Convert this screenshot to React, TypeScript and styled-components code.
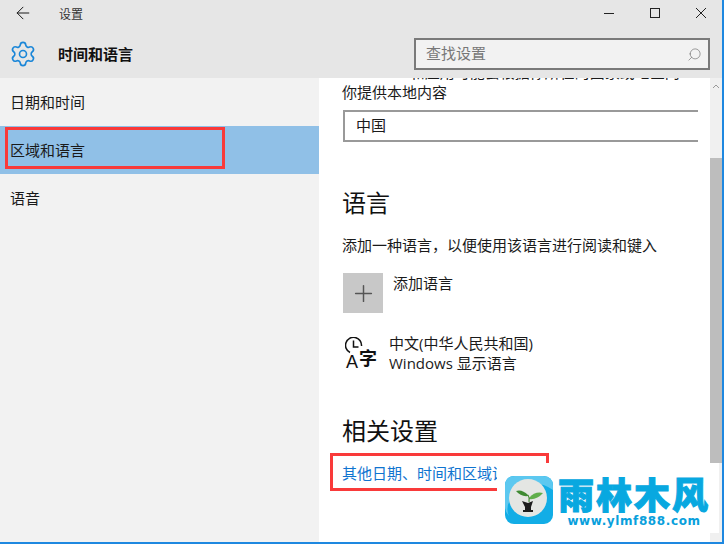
import React from "react";
import styled, { createGlobalStyle } from "styled-components";
import { ArrowLeft, Search, Plus, Settings } from "lucide-react";

const GlobalStyle = createGlobalStyle`
  html, body {
    margin: 0;
    padding: 0;
    background: #ffffff;
  }
  * {
    box-sizing: border-box;
  }
`;

const cjk = `"Noto Sans CJK SC", "Liberation Sans", sans-serif`;
const latinFirst = `"Open Sans", "Noto Sans CJK SC", sans-serif`;

const Window = styled.div`
  width: 724px;
  height: 544px;
  display: flex;
  flex-direction: column;
  position: relative;
  overflow: hidden;
  font-family: ${cjk};
  color: #1a1a1a;
  border-bottom: 2px solid #1e88e0;
  border-right: 2px solid #1e88e0;
`;

const Header = styled.div`
  height: 78px;
  background: #e6e6e6;
  flex: none;
  position: relative;
  z-index: 1;
`;

const TitleBar = styled.div`
  height: 26px;
  display: flex;
  align-items: center;
  padding-left: 13px;
  font-size: 12px;
`;

const TitleText = styled.span`
  margin-left: 26px;
  color: #333;
`;

const WinButtons = styled.div`
  margin-left: auto;
  display: flex;
  align-items: center;
  gap: 34px;
  padding-right: 15px;
  color: #222;
`;

const WinIcon = styled.svg`
  display: block;
  width: 12px;
  height: 12px;
  fill: none;
  stroke: currentColor;
  stroke-width: 1;
`;

const AppBar = styled.div`
  height: 52px;
  display: flex;
  align-items: center;
  padding: 4px 12px 0 9px;
`;

const AppTitle = styled.h1`
  margin: 0 0 0 21px;
  padding-bottom: 2px;
  font-size: 15px;
  font-weight: 700;
  color: #111;
`;

const SearchBox = styled.div`
  margin-left: auto;
  width: 296px;
  height: 32px;
  border: 2px solid #7a7a7a;
  background: #f2f2f2;
  display: flex;
  align-items: center;
  justify-content: space-between;
  padding: 0 6px 3px 10px;
  font-size: 15px;
  color: #777;
`;

const SearchGlyph = styled(Search)`
  transform: scaleX(-1);
  color: #666;
  margin-top: 3px;
`;

const Body = styled.div`
  flex: 1;
  display: flex;
  min-height: 0;
`;

const Sidebar = styled.nav`
  width: 319px;
  background: #f2f2f2;
  flex: none;
`;

const NavItem = styled.div<{ $active?: boolean }>`
  height: 48px;
  display: flex;
  align-items: center;
  padding: 0 0 2px 10px;
  font-size: 15px;
  background: ${(p) => (p.$active ? "#90c0e7" : "transparent")};
  color: #1a1a1a;
`;

const Content = styled.main`
  flex: 1;
  padding-left: 24px;
  background: #fff;
  overflow: hidden;
`;

const ClippedLine = styled.p`
  margin: -17px 0 0 -1px;
  font-family: ${latinFirst};
  font-size: 15px;
  line-height: 22px;
  white-space: nowrap;
`;

const Line = styled.p<{ $top?: number }>`
  margin: ${(p) => p.$top ?? 0}px 0 0 -1px;
  font-size: 15px;
  line-height: 22px;
`;

const RegionSelect = styled.div`
  margin-top: 7px;
  width: 355px;
  height: 32px;
  border: 2px solid #999;
  border-right: none;
  display: flex;
  align-items: center;
  padding: 0 0 3px 11px;
  font-size: 15px;
`;

const SectionTitle = styled.h2<{ $top: number }>`
  margin: ${(p) => p.$top}px 0 0 -1px;
  padding-bottom: 2px;
  font-size: 24px;
  line-height: 30px;
  font-weight: 400;
  color: #111;
`;

const AddRow = styled.div`
  display: flex;
  gap: 10px;
  margin-top: 17px;
`;

const AddTile = styled.div`
  width: 40px;
  height: 40px;
  background: #c8c8c8;
  display: flex;
  align-items: center;
  justify-content: center;
  color: #555;
`;

const AddLabel = styled.span`
  font-size: 15px;
  line-height: 19px;
`;

const LangRow = styled.div`
  display: flex;
  gap: 10px;
  margin-top: 20px;
  padding-left: 2px;
`;

const LangGlyph = styled.svg`
  width: 34px;
  height: 36px;
  margin-top: 4px;
  flex: none;
`;

const LangText = styled.div`
  font-family: ${latinFirst};
  font-size: 15px;
  line-height: 20px;
`;

const RelatedLink = styled.a`
  display: block;
  margin: 16px 0 0 -1px;
  color: #0f74d0;
  font-size: 15px;
  line-height: 20px;
  white-space: nowrap;
`;

const Scrollbar = styled.div`
  width: 12px;
  flex: none;
  background: #f0f0f0;
  padding-top: 80px;
  position: relative;
`;

const ScrollThumb = styled.div`
  height: 305px;
  background: #bdbdbd;
`;

const ScrollUp = styled.svg`
  position: absolute;
  top: 5px;
  left: 2px;
`;

const Highlight = styled.div<{ $left: number; $top: number; $w: number; $h: number }>`
  position: absolute;
  left: ${(p) => p.$left}px;
  top: ${(p) => p.$top}px;
  width: ${(p) => p.$w}px;
  height: ${(p) => p.$h}px;
  border: 3px solid #f93a3a;
  pointer-events: none;
`;

const Watermark = styled.div`
  position: absolute;
  left: 497px;
  top: 463px;
  width: 222px;
  height: 70px;
  background: #fff;
  display: flex;
  align-items: flex-start;
  padding: 13px 0 0 8px;
  gap: 5px;
`;

const BrandText = styled.div`
  display: flex;
  flex-direction: column;
  align-items: center;
  margin-top: -3px;
  white-space: nowrap;
`;

const BrandName = styled.div`
  font-size: 36px;
  line-height: 40px;
  font-weight: 900;
  color: #08a8e0;
  letter-spacing: 2px;
  -webkit-text-stroke: 1px #08a8e0;
`;

const BrandUrl = styled.div`
  margin-top: 1px;
  font-size: 12px;
  line-height: 14px;
  font-weight: 700;
  color: #08a0dc;
  font-family: "DejaVu Sans", sans-serif;
  letter-spacing: 0.6px;
`;

const TaskbarSliver = styled.div`
  position: absolute;
  left: 0;
  bottom: -2px;
  width: 81px;
  height: 1px;
  background: #0a3f78;
`;

const Logo = () => (
  <svg width="48" height="48" viewBox="0 0 48 48">
    <rect width="48" height="48" rx="9" fill="#12ade6" />
    <path d="M0 10 Q0 0 10 0 H38 Q48 0 48 10 V14 Q24 -2 6 22 Q0 32 4 40 Q0 36 0 30Z" fill="#5cc8f0" />
    <circle cx="23" cy="22" r="19" fill="#e4e6e3" />
    <path d="M23 19 Q17 13 11 15 Q16 21 23 20Z" fill="#3f8a33" />
    <path d="M24 22 Q30 15 38 17 Q32 24 24 23Z" fill="#5fae4a" />
    <path d="M23 19 Q25 22 24 26" stroke="#4a8a3a" strokeWidth="1.2" fill="none" />
    <path d="M17 25 L23 27 L28 25 L26 31 V34 H28 V36 H18 V34 H20 V31Z" fill="#1d1d1d" />
  </svg>
);

const LangIcon = () => (
  <LangGlyph viewBox="0 0 34 36" fill="none" stroke="#111">
    <path d="M5 15.5 A8 8 0 1 1 16.5 9" strokeWidth="1.5" />
    <path d="M8.5 3.5 V10 H13.5" strokeWidth="1.5" />
    <text x="1" y="31" fontSize="18" fill="#111" stroke="none" fontFamily="Liberation Sans, sans-serif">A</text>
    <text x="14" y="28" fontSize="18" fontWeight="700" fill="#111" stroke="none" fontFamily="Noto Sans CJK SC, sans-serif">字</text>
  </LangGlyph>
);

export default function App() {
  return (
    <Window>
      <GlobalStyle />
      <Header>
        <TitleBar>
          <ArrowLeft size={20} strokeWidth={1.2} />
          <TitleText>设置</TitleText>
          <WinButtons>
            <WinIcon viewBox="0 0 12 12">
              <path d="M1 6.5 H11" />
            </WinIcon>
            <WinIcon viewBox="0 0 12 12">
              <rect x="1.5" y="1.5" width="9" height="9" />
            </WinIcon>
            <WinIcon viewBox="0 0 12 12">
              <path d="M1 1 L11 11 M11 1 L1 11" />
            </WinIcon>
          </WinButtons>
        </TitleBar>
        <AppBar>
          <Settings size={28} strokeWidth={1.4} color="#1a86d8" />
          <AppTitle>时间和语言</AppTitle>
          <SearchBox>
            查找设置
            <SearchGlyph size={15} strokeWidth={1} />
          </SearchBox>
        </AppBar>
      </Header>
      <Body>
        <Sidebar>
          <NavItem>日期和时间</NavItem>
          <NavItem $active>区域和语言</NavItem>
          <NavItem>语音</NavItem>
        </Sidebar>
        <Content>
          <ClippedLine>Windows 和应用可能会根据你所在的国家或地区向</ClippedLine>
          <Line $top={-2}>你提供本地内容</Line>
          <RegionSelect>中国</RegionSelect>
          <SectionTitle $top={45}>语言</SectionTitle>
          <Line $top={15}>添加一种语言，以便使用该语言进行阅读和键入</Line>
          <AddRow>
            <AddTile>
              <Plus size={27} strokeWidth={1.3} />
            </AddTile>
            <AddLabel>添加语言</AddLabel>
          </AddRow>
          <LangRow>
            <LangIcon />
            <LangText>
              中文(中华人民共和国)
              <br />
              Windows 显示语言
            </LangText>
          </LangRow>
          <SectionTitle $top={42}>相关设置</SectionTitle>
          <RelatedLink>其他日期、时间和区域设置</RelatedLink>
        </Content>
        <Scrollbar>
          <ScrollUp width="8" height="6" viewBox="0 0 8 6" fill="none" stroke="#999">
            <path d="M1 5 L4 2 L7 5" />
          </ScrollUp>
          <ScrollThumb />
        </Scrollbar>
      </Body>
      <Highlight $left={5} $top={127} $w={220} $h={42} />
      <Highlight $left={330} $top={453} $w={219} $h={38} />
      <Watermark>
        <Logo />
        <BrandText>
          <BrandName>雨林木风</BrandName>
          <BrandUrl>www.ylmf888.com</BrandUrl>
        </BrandText>
      </Watermark>
      <TaskbarSliver />
    </Window>
  );
}
